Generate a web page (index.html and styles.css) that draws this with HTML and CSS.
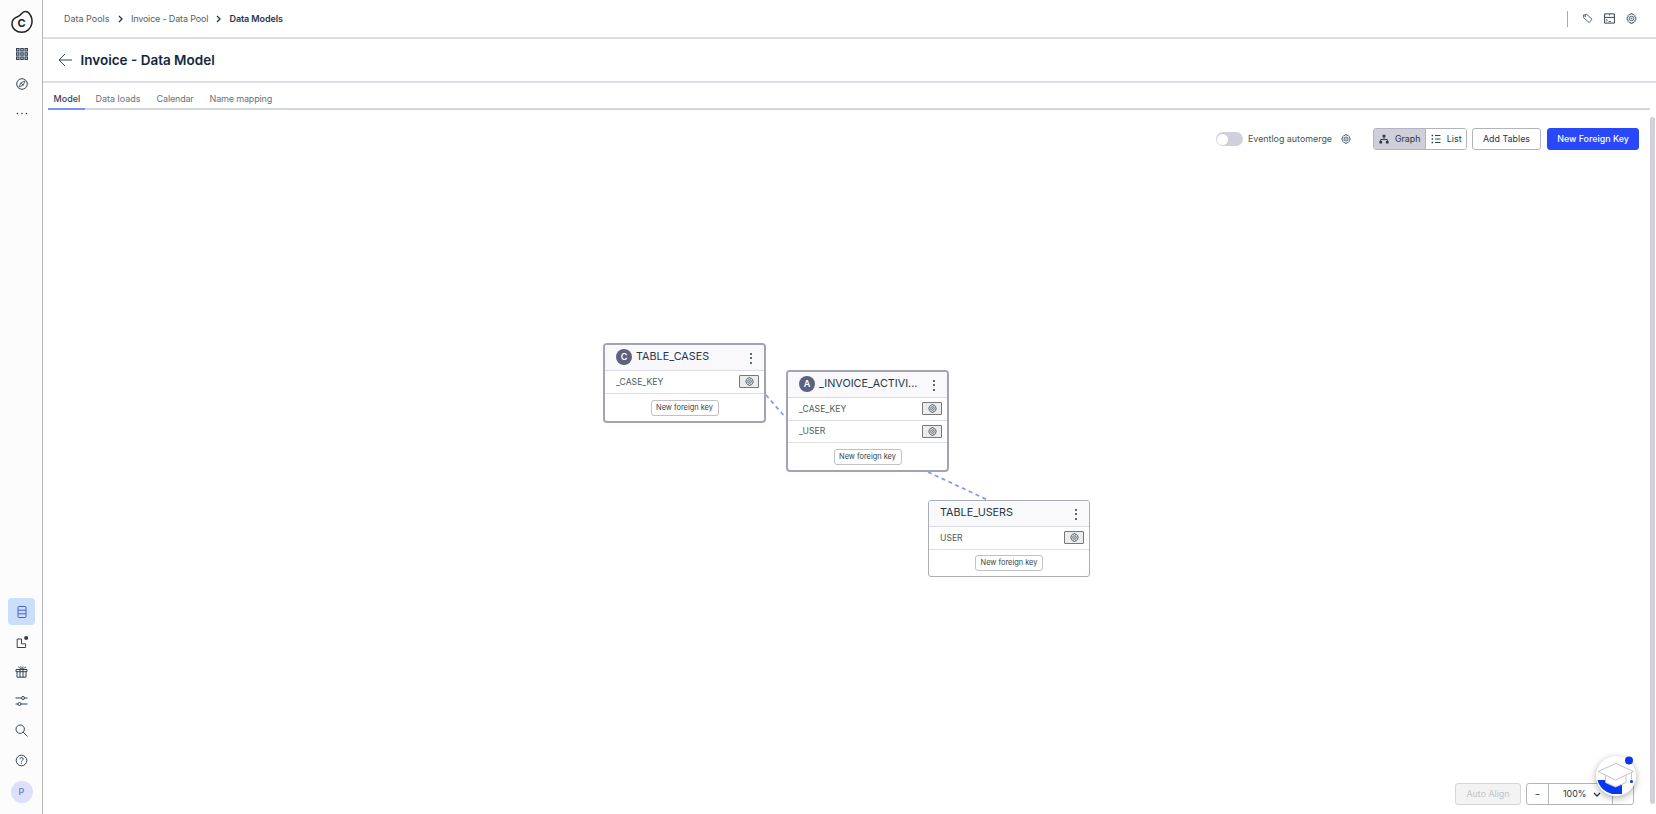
FILE: index.html
```html
<!DOCTYPE html>
<html lang="en">
<head>
<meta charset="utf-8">
<title>Invoice - Data Model</title>
<link rel="stylesheet" href="styles.css">
</head>
<body>
<svg class="defs" width="0" height="0">
  <symbol id="gear" viewBox="0 0 16 16"><path d="M6.800 1h2.400l.6 1.600 1.600-.4 1.700 1.700-.4 1.700 1.700.7v3.400l-1.700.7.4 1.700-1.700 1.700-1.600-.4-.6 1.600H6.800l-.6-1.600-1.600.4-1.700-1.700.4-1.700-1.700-.7V6.300l1.700-.7-.4-1.700 1.700-1.700 1.600.4z"/><circle cx="8" cy="8" r="3.200"/><circle cx="8" cy="8" r=".5"/></symbol>
</svg>
<div class="app">
  <nav class="sidebar">
    <a class="logo"><svg width="24" height="24" viewBox="0 0 24 24"><path d="M12 3.200C14 .9 17.300.9 19.300 3.500c2.300 3 3.200 6.600 2.500 10.200-.9 5-5.100 8.500-10 8.500-5.400 0-9.800-3.600-9.800-8.300 0-3.500 2-6 5.600-7.100C9.800 6.100 10.700 4.700 12 3.200z"/></svg><span class="logo-letter">C</span></a>
    <a class="nav-item"><svg width="12" height="12" viewBox="0 0 12 12"><g class="grid-dots"><rect x=".6" y=".6" width="2.400" height="2.400"/><rect x="4.800" y=".6" width="2.400" height="2.400"/><rect x="9" y=".6" width="2.400" height="2.400"/><rect x=".6" y="4.800" width="2.400" height="2.400"/><rect x="4.800" y="4.800" width="2.400" height="2.400"/><rect x="9" y="4.800" width="2.400" height="2.400"/><rect x=".6" y="9" width="2.400" height="2.400"/><rect x="4.800" y="9" width="2.400" height="2.400"/><rect x="9" y="9" width="2.400" height="2.400"/></g></svg></a>
    <a class="nav-item"><svg width="12" height="12" viewBox="0 0 12 12"><circle cx="6" cy="6" r="5.300"/><path class="thin" d="M9 3 7.200 7.200 3 9l1.800-4.200zM4.800 4.800l2.400 2.400"/></svg></a>
    <a class="nav-item"><svg width="12" height="12" viewBox="0 0 12 12"><g class="solid"><circle cx="1.500" cy="6.500" r=".8"/><circle cx="6" cy="6.500" r=".8"/><circle cx="10.500" cy="6.500" r=".8"/></g></svg></a>
    <div class="grow"></div>
    <a class="nav-item active"><svg width="12" height="14" viewBox="0 0 12 14"><rect x="2" y="1.500" width="8" height="11" rx=".8"/><path d="M2 5.200h8M2 8.800h8"/></svg></a>
    <a class="nav-item"><svg width="14" height="14" viewBox="0 0 14 14"><path d="M6.500 4H2.200v8.500h8.400V8.800H6.500z"/><rect class="solid" x="9.400" y="1.200" width="3.600" height="3.600" rx="1"/></svg></a>
    <a class="nav-item"><svg width="13" height="13" viewBox="0 0 13 13"><path d="M1 4.500h11v2.200H1zM2 6.700v5.500h9V6.700M5 4.500v7.700M8 4.500v7.700"/><path class="thin" d="M6.500 4.500 3 1.500M6.500 4.500l-.8-3.500M6.500 4.500l1.800-3.200M6.500 4.500 11 2"/></svg></a>
    <a class="nav-item"><svg width="13" height="12" viewBox="0 0 13 12"><path d="M.5 3H6.500M9.500 3H12.500M.5 9H3M6 9h6.500"/><circle cx="8" cy="3" r="1.500"/><circle cx="4.500" cy="9" r="1.500"/></svg></a>
    <a class="nav-item"><svg width="13" height="13" viewBox="0 0 13 13"><circle cx="5.200" cy="5.200" r="4.200"/><path d="m8.200 8.200 4.200 4.200"/></svg></a>
    <a class="nav-item"><svg width="13" height="13" viewBox="0 0 13 13"><circle cx="6.500" cy="6.500" r="5.300"/><path d="M4.900 5.200c0-2.200 3.300-2.200 3.300-.2 0 1.200-1.700 1.300-1.700 2.600M6.500 8.700v1"/></svg></a>
    <a class="avatar">P</a>
  </nav>
  <main class="main">
    <header class="topbar">
      <div class="crumbs">
        <span class="crumb">Data Pools</span>
        <svg class="chev" width="5" height="8" viewBox="0 0 5 8"><path d="m1 1 3 3-3 3"/></svg>
        <span class="crumb narrow">Invoice - Data Pool</span>
        <svg class="chev" width="5" height="8" viewBox="0 0 5 8"><path d="m1 1 3 3-3 3"/></svg>
        <span class="crumb current">Data Models</span>
      </div>
      <div class="tools">
        <span class="rule"></span>
        <svg width="11" height="11" viewBox="0 0 11 11"><path class="thin" d="M1.400 2 4.800 1.400l5.200 4.800-2.800 3.400L1.800 5z"/><circle class="solid" cx="3.200" cy="3" r=".8"/></svg>
        <svg width="11" height="11" viewBox="0 0 11 11"><path d="M.6.900h9.800v9.200H.6zM.6 4.400h9.800"/><path class="thin" d="M5.500 1v1.500M2 6.300l1.400 1L2 8.300M4.500 8.500h2.500"/></svg>
        <svg width="11" height="11" class="gear"><use href="#gear"/></svg>
      </div>
    </header>
    <div class="titlebar">
      <svg width="14" height="14" viewBox="0 0 14 14"><path d="M14 7H1M7 1 1 7l6 6"/></svg>
      <h1 class="title">Invoice - Data Model</h1>
    </div>
    <div class="tabs">
      <a class="tab selected">Model</a><a class="tab">Data loads</a><a class="tab narrow">Calendar</a><a class="tab narrow">Name mapping</a>
    </div>
    <section class="workspace">
      <div class="toolbar">
        <span class="switch"></span>
        <span class="switch-label">Eventlog automerge</span>
        <svg width="10" height="10" class="gear"><use href="#gear"/></svg>
        <div class="segmented">
          <button class="seg on"><svg width="10" height="10" viewBox="0 0 10 10"><path d="M5 3v2.500M1.700 7.500v-2h6.600v2"/><path class="solid" d="M3.600.7h2.800v2.500H3.600zM.4 7h2.700v2.500H.4zM6.900 7h2.700v2.500H6.900z"/></svg>Graph</button>
          <button class="seg"><svg width="10" height="10" viewBox="0 0 10 10"><path d="M4 1.500h5.500M4 5h5.500M4 8.500h5.500"/><path class="solid" d="M.6.800h1.500v1.500H.6zM.6 4.200h1.500v1.500H.6zM.6 7.700h1.500v1.500H.6z"/></svg>List</button>
        </div>
        <button class="btn add">Add Tables</button>
        <button class="btn primary">New Foreign Key</button>
      </div>
      <div class="graph">
        <svg class="edges" width="1606" height="705" viewBox="43 109 1606 705"><path d="M766 394 786 417M928 471 990 500"/></svg>
        <article class="node strong cases">
          <div class="node-head"><span class="badge">C</span><span class="name">TABLE_CASES</span><span class="kebab"><i></i><i></i><i></i></span></div>
          <div class="field"><span>_CASE_KEY</span><button class="key"><svg width="9" height="9" class="gear"><use href="#gear"/></svg></button></div>
          <div class="node-foot"><button class="fk">New foreign key</button></div>
        </article>
        <article class="node strong activities">
          <div class="node-head"><span class="badge">A</span><span class="name">_INVOICE_ACTIVI...</span><span class="kebab"><i></i><i></i><i></i></span></div>
          <div class="field"><span>_CASE_KEY</span><button class="key"><svg width="9" height="9" class="gear"><use href="#gear"/></svg></button></div>
          <div class="field"><span>_USER</span><button class="key"><svg width="9" height="9" class="gear"><use href="#gear"/></svg></button></div>
          <div class="node-foot"><button class="fk">New foreign key</button></div>
        </article>
        <article class="node users">
          <div class="node-head"><span class="name">TABLE_USERS</span><span class="kebab"><i></i><i></i><i></i></span></div>
          <div class="field"><span>USER</span><button class="key"><svg width="9" height="9" class="gear"><use href="#gear"/></svg></button></div>
          <div class="node-foot"><button class="fk">New foreign key</button></div>
        </article>
      </div>
      <div class="bottom">
        <button class="btn align">Auto Align</button>
        <div class="zoom"><span class="minus">−</span><span class="percent">100%<svg class="chev" width="8" height="5" viewBox="0 0 8 5"><path d="m1 1 3 3 3-3"/></svg></span><span class="plus"></span></div>
      </div>
      <div class="scrollbar"></div>
      <div class="academy">
        <svg width="42" height="44" viewBox="0 0 42 44">
          <path class="blue" d="M2.500 26H27V40H17C10 38 4 33 2.500 26z"/>
          <path class="cap" d="M10.500 20v8.500L20.500 33 31 28.500V20"/>
          <path class="cap" d="M21 9.500 38.500 17.500 20.500 26 3 17.500z"/>
          <path class="cap" d="M36.500 18.500v7"/>
          <circle class="blue" cx="34" cy="6.500" r="4"/>
          <circle class="blue" cx="36.500" cy="27.500" r="1.600"/>
        </svg>
      </div>
    </section>
  </main>
</div>
</body>
</html>
```
FILE: styles.css
```css
* { box-sizing: border-box; }
body { margin: 0; background: #fff; color: #24364a; font: 8.900px/12px Inter, "Liberation Sans", sans-serif; }
button { margin: 0; padding: 0; font: inherit; color: inherit; background: #fff; }
svg { display: block; flex: none; fill: none; stroke: #334450; stroke-width: 1; overflow: visible; }
.defs { position: absolute; }
.solid { fill: #26384a; stroke: none; }
.thin { stroke-width: .8; }
.grid-dots { stroke-width: 1.100; stroke: #24364a; }
.gear { stroke-width: 1.300; }
.app { display: flex; width: 1656px; height: 814px; overflow: hidden; }

.sidebar { width: 43px; flex: none; display: flex; flex-direction: column; align-items: center; padding: 10px 0 11px 1px; border-right: 1px solid #b4b5b9; background: #fcfcfc; }
.logo { position: relative; width: 24px; height: 24px; margin-bottom: 5.500px; }
.logo svg { stroke: #222; stroke-width: 1.500; }
.logo-letter { position: absolute; inset: 2px 0 0; text-align: center; font-weight: 700; font-size: 11px; line-height: 22px; color: #222; }
.nav-item { height: 29.600px; width: 27px; display: flex; align-items: center; justify-content: center; }
.grow { flex: 1; }
.active { height: 27px; margin-bottom: 2px; border-radius: 4px; background: #cbdffb; }
.active svg { stroke: #4762ce; }
.avatar { width: 22px; height: 22px; margin-top: 6px; border-radius: 50%; background: #dde0f7; color: #6874dc; text-align: center; line-height: 22px; font-size: 9px; font-weight: 500; }

.main { flex: 1; display: flex; flex-direction: column; min-width: 0; }
.topbar { height: 39px; flex: none; display: flex; justify-content: space-between; padding: 0 19px 0 21px; border-bottom: 2px solid #dcdce1; }
.crumbs, .tools { display: flex; align-items: center; }
.crumbs { gap: 8.200px; }
.crumb { color: #53616a; font-size: 9px; }
.narrow { letter-spacing: -.17px; }
.current { color: #24364a; font-weight: 600; letter-spacing: -.1px; }
.chev { stroke: #24364a; stroke-width: 1.300; }
.tools { gap: 11px; }
.rule { width: 1px; height: 16px; background: #a7abb5; margin-right: 3px; }
.titlebar { height: 44px; flex: none; display: flex; align-items: center; gap: 9px; padding: 0 0 1px 14.500px; border-bottom: 2px solid #dedfe4; }
.title { margin: 0; font-size: 13.500px; line-height: 20px; font-weight: 600; color: #12283f; }
.tabs { height: 27px; flex: none; display: flex; margin: 0 6px 0 5px; border-bottom: 2px solid #d4d6dd; }
.tab { height: 27px; padding: 10px 5.500px 0; margin-right: 5px; font-size: 9px; color: #68737c; }
.selected { width: 37px; color: #34445a; font-weight: 500; border-bottom: 2px solid #7891f5; }

.workspace { position: relative; flex: 1; display: flex; flex-direction: column; justify-content: space-between; padding: 18px 17px 9px 0; }
.toolbar { display: flex; justify-content: flex-end; align-items: center; height: 22px; }
.switch { width: 27px; height: 14px; border-radius: 7px; background: #d0d0da; padding: 1.500px; }
.switch::before { content: ""; display: block; width: 11px; height: 11px; border-radius: 50%; background: #fff; }
.switch-label { margin: 0 9px 0 5px; color: #46564f; }
.segmented { display: flex; width: 94px; height: 22px; margin: 0 5px 0 22px; border: 1px solid #b3b4bf; border-radius: 3px; overflow: hidden; }
.seg { display: flex; align-items: center; justify-content: center; gap: 6px; border: 0; width: 40px; }
.seg.on { width: 53px; background: #cfcfda; border-right: 1px solid #b3b4bf; }
.btn { height: 22px; border: 1px solid #b3b4bf; border-radius: 3px; }
.add { width: 69px; margin-right: 6px; }
.primary { width: 92px; border-color: #2848fa; background: #2848fa; color: #fff; font-weight: 500; }

.graph { position: absolute; inset: 0; pointer-events: none; }
.edges { position: absolute; left: 0; top: 0; stroke: #8298ea; stroke-width: 1.700; stroke-dasharray: 4 3.500; }
.node { position: absolute; width: 162px; border: 1px solid #aaadb9; border-radius: 3px; background: #fff; overflow: hidden; }
.strong { width: 163px; border: 2px solid #a2a4b6; border-radius: 4px; }
.cases { left: 560px; top: 233px; height: 80px; }
.activities { left: 743px; top: 260px; height: 102px; }
.users { left: 885px; top: 390px; height: 77px; }
.node-head { display: flex; align-items: center; height: 26px; padding: 0 12.500px 2px 11px; border-bottom: 1px solid #dadbe3; background: #f9f9fc; }
.badge { width: 16px; height: 16px; margin-right: 4px; border-radius: 50%; background: #5c617e; color: #fff; font-size: 9px; line-height: 16px; text-align: center; font-weight: 600; }
.name { flex: 1; font-size: 10.800px; white-space: nowrap; }
.kebab { display: flex; flex-direction: column; gap: 2.500px; padding-top: 3px; }
.kebab i { width: 2px; height: 2px; border-radius: 50%; background: #24364a; }
.field { display: flex; align-items: center; justify-content: space-between; height: 22.500px; padding: 0 5px 0 11px; border-bottom: 1px solid #dddee5; color: #4a5b59; font-size: 8.600px; }
.key { width: 20px; height: 13px; display: grid; place-items: center; background: #ececec; border: 1px solid #777; border-radius: 1px; }
.node-foot { display: flex; justify-content: center; padding-top: 6px; }
.users .node-foot { padding-top: 5px; }
.fk { width: 68px; height: 16px; border: 1px solid #bfc0c8; border-radius: 3px; font-size: 7.400px; line-height: 14px; color: #33434b; }

.bottom { display: flex; justify-content: flex-end; gap: 5px; height: 22px; padding-right: 5px; }
.align { width: 66px; background: #f3f3f4; border-color: #d7d7da; color: #c1c3c8; }
.zoom { display: flex; width: 108px; border: 1px solid #b2b5bf; border-radius: 3px; line-height: 20px; }
.minus, .percent { border-right: 1px solid #b2b5bf; }
.minus { width: 22px; text-align: center; }
.percent { width: 64px; display: flex; align-items: center; gap: 6px; padding-left: 14px; }
.scrollbar { position: absolute; left: 1607px; top: 7px; width: 5px; height: 687px; border-radius: 3px; background: #d0d1da; }
.academy { position: absolute; left: 1553px; top: 646px; width: 40px; height: 40px; border-radius: 50%; background: #fff; box-shadow: 0 2px 7px #0005; }
.academy svg { margin: -2px 0 0 -1px; }
.blue { fill: #0837f3; stroke: none; }
.cap { fill: #fff; stroke: #c4c4c8; }
```
